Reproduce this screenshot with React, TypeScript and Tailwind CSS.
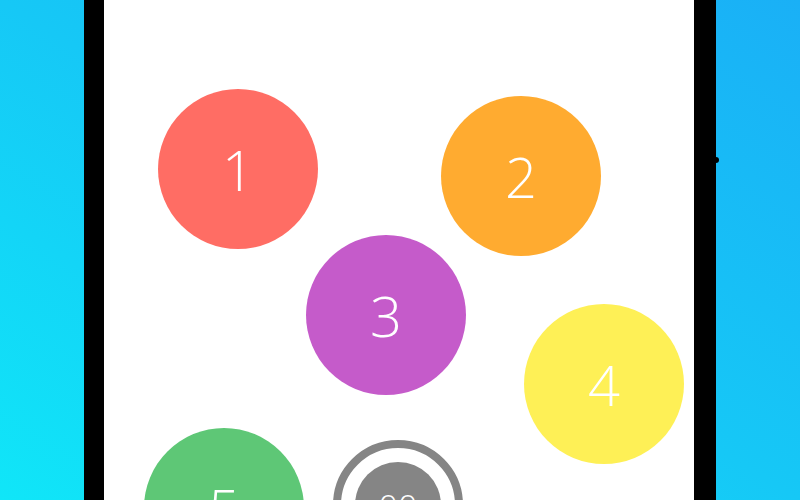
const bubbles = [
  { n: '1', pos: 'left-[54px] top-[89px]', color: 'bg-[#ff6d64]' },
  { n: '2', pos: 'left-[337px] top-[96px]', color: 'bg-[#ffab30]' },
  { n: '3', pos: 'left-[202px] top-[235px]', color: 'bg-[#c55bca]' },
  { n: '4', pos: 'left-[420px] top-[304px]', color: 'bg-[#fef056]' },
  { n: '5', pos: 'left-[40px] top-[428px]', color: 'bg-[#5ec776]' },
];

export default function App() {
  return (
    <div className="w-[800px] h-[500px] overflow-hidden bg-gradient-to-bl from-[#1ab0f6] via-[#16c8f6] to-[#10e6f8] pl-[84px]">
      {/* phone body, runs past the top and bottom of the view */}
      <div className="relative w-[632px] h-[500px] bg-black pl-[20px] pr-[22px]">
        <div className="absolute -right-[3px] top-[157px] w-[4px] h-[6px] bg-black rounded-r-sm" />
        <div className="relative h-full bg-white overflow-hidden font-['Open_Sans',sans-serif]">
          {bubbles.map((b) => (
            <div
              key={b.n}
              className={`absolute ${b.pos} ${b.color} w-[160px] h-[160px] rounded-full flex items-center justify-center text-white text-[56px] font-light leading-none`}
            >
              {b.n}
            </div>
          ))}
          {/* timer button */}
          <div className="absolute left-[229px] top-[440px] w-[130px] h-[130px] rounded-full border-[8px] border-[#858585] flex items-center justify-center">
            <div className="w-[86px] h-[86px] rounded-full bg-[#858585] flex items-start justify-center pt-[28px] text-white text-[34px] font-light leading-none">
              00
            </div>
          </div>
        </div>
      </div>
    </div>
  );
}
